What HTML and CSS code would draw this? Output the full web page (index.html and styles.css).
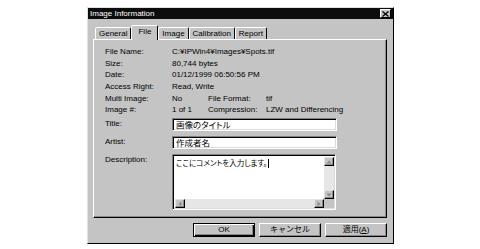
FILE: index.html
```html
<!DOCTYPE html>
<html>
<head lang="ja">
    <meta charset="UTF-8">
    <title>Image Information</title>
    <link rel="stylesheet" href="styles.css">
</head>
<body>
<div class="dialog">
    <div class="titlebar">
        <span>Image Information</span>
        <span class="close">
            <svg width="7" height="6" viewBox="0 0 7 6"><path d="M0.5 0.5L6.5 5.5M6.5 0.5L0.5 5.5" stroke="#000" stroke-width="1.3"/></svg>
        </span>
    </div>
    <div class="tabs">
        <span class="tab">General</span>
        <span class="tab active">File</span>
        <span class="tab">Image</span>
        <span class="tab">Calibration</span>
        <span class="tab">Report</span>
    </div>
    <div class="panel">
        <div class="info">
            <div class="row"><span class="label">File Name:</span><span>C:¥IPWin4¥Images¥Spots.tif</span></div>
            <div class="row"><span class="label">Size:</span><span>80,744 bytes</span></div>
            <div class="row"><span class="label">Date:</span><span>01/12/1999 06:50:56 PM</span></div>
            <div class="row"><span class="label">Access Right:</span><span>Read, Write</span></div>
            <div class="row"><span class="label">Multi Image:</span><span class="val">No</span><span class="label2">File Format:</span><span>tif</span></div>
            <div class="row"><span class="label">Image #:</span><span class="val">1 of 1</span><span class="label2">Compression:</span><span>LZW and Differencing</span></div>
        </div>
        <div class="field first">
            <span class="label">Title:</span>
            <div class="input">画像のタイトル</div>
        </div>
        <div class="field">
            <span class="label">Artist:</span>
            <div class="input">作成者名</div>
        </div>
        <div class="field">
            <span class="label">Description:</span>
            <div class="memo">
                <div class="memo-text">ここにコメントを入力します。<span class="caret"></span></div>
                <div class="vscroll">
                    <span class="sbtn"><svg width="6" height="4" viewBox="0 0 6 4"><polygon points="3,0.5 5.5,3.5 0.5,3.5" fill="#8a8a8a"/></svg></span>
                    <span class="track"></span>
                    <span class="sbtn"><svg width="6" height="4" viewBox="0 0 6 4"><polygon points="0.5,0.5 5.5,0.5 3,3.5" fill="#8a8a8a"/></svg></span>
                </div>
                <div class="hscroll">
                    <span class="sbtn"><svg width="4" height="6" viewBox="0 0 4 6"><polygon points="0.5,3 3.5,0.5 3.5,5.5" fill="#8a8a8a"/></svg></span>
                    <span class="track"></span>
                    <span class="sbtn"><svg width="4" height="6" viewBox="0 0 4 6"><polygon points="0.5,0.5 3.5,3 0.5,5.5" fill="#8a8a8a"/></svg></span>
                </div>
                <div class="corner"></div>
            </div>
        </div>
    </div>
    <div class="buttons">
        <span class="btn default">OK</span>
        <span class="btn">キャンセル</span>
        <span class="btn">適用(<u>A</u>)</span>
    </div>
</div>
</body>
</html>
```

FILE: styles.css
```css
* {
    margin: 0;
    padding: 0;
    box-sizing: border-box;
}

body {
    background: #ffffff;
    font-family: "Liberation Sans", "Noto Sans CJK JP", sans-serif;
    font-size: 8px;
    color: #000000;
}

.dialog {
    margin: 7px 0 0 87px;
    width: 307px;
    background: #c4c4c4;
    border: 1px solid;
    border-color: #e2e2e2 #000000 #000000 #e2e2e2;
    padding-bottom: 6px;
}

.titlebar {
    height: 11px;
    background: #0c0c0c;
    color: #ffffff;
    display: flex;
    align-items: center;
    justify-content: space-between;
    padding: 0 2px 0 2px;
    line-height: 11px;
}

.close {
    width: 11px;
    height: 9px;
    background: #c4c4c4;
    border: 1px solid;
    border-color: #ffffff #000000 #000000 #ffffff;
    display: flex;
    align-items: center;
    justify-content: center;
}

.tabs {
    display: flex;
    align-items: flex-end;
    height: 14px;
    margin: 6px 0 0 7px;
    position: relative;
    z-index: 1;
}

.tab {
    height: 12px;
    line-height: 11px;
    padding: 0 3px;
    border: 1px solid;
    border-bottom: none;
    border-color: #ffffff #000000 transparent #ffffff;
    border-radius: 2px 2px 0 0;
    background: #c4c4c4;
}

.tab.active {
    height: 15px;
    margin-bottom: -1px;
    padding: 0 6px;
    line-height: 12px;
}

.panel {
    height: 179px;
    margin: 0 6px 0 5px;
    border: 1px solid;
    border-color: #ffffff #000000 #000000 #ffffff;
    box-shadow: inset -1px -1px #888888;
    padding: 6px 0 0 11px;
}

.row {
    display: flex;
    height: 11.7px;
    line-height: 11.7px;
}

.label {
    width: 67px;
    flex: none;
}

.val {
    width: 36px;
}

.label2 {
    width: 58px;
}

.field {
    display: flex;
    margin-top: 5px;
}

.field.first {
    margin-top: 2px;
}

.field .label {
    line-height: 11px;
}

.input,
.memo {
    background: #ffffff;
    border: 1px solid;
    border-color: #808080 #ffffff #ffffff #808080;
    box-shadow: inset 1px 1px #000000, inset -1px -1px #dcdcdc;
    font-family: "Noto Sans CJK JP", sans-serif;
    font-size: 8.5px;
    font-feature-settings: "palt" 1;
}

.input {
    width: 165px;
    height: 13px;
    line-height: 11px;
    padding: 0 3px;
}

.memo {
    width: 164px;
    height: 56px;
    padding: 2px 1px 1px 2px;
    display: grid;
    grid-template-columns: 1fr 10px;
    grid-template-rows: 1fr 9px;
}

.memo-text {
    padding: 0 1px;
    line-height: 11px;
    font-size: 7.5px;
}

.caret {
    display: inline-block;
    width: 1px;
    height: 9px;
    margin-left: 1px;
    background: #000000;
    vertical-align: -2px;
}

.vscroll,
.hscroll {
    display: flex;
    background: #e6e6e6;
}

.vscroll {
    flex-direction: column;
}

.track {
    flex: 1;
}

.sbtn {
    flex: none;
    width: 10px;
    height: 9px;
    background: #c4c4c4;
    border: 1px solid;
    border-color: #e2e2e2 #000000 #000000 #e2e2e2;
    box-shadow: inset -1px -1px #888888;
    display: flex;
    align-items: center;
    justify-content: center;
}

.corner {
    background: #c4c4c4;
}

.buttons {
    display: flex;
    justify-content: flex-end;
    gap: 4px;
    margin: 5px 6px 0 0;
}

.btn {
    width: 62px;
    height: 14px;
    line-height: 12px;
    text-align: center;
    border: 1px solid;
    border-color: #ffffff #000000 #000000 #ffffff;
    box-shadow: inset -1px -1px #888888;
    font-size: 8px;
}

.btn.default {
    border: 1px solid #000000;
    box-shadow: inset 1px 1px #ffffff, inset -1px -1px #000000, inset -2px -2px #888888;
}
```
